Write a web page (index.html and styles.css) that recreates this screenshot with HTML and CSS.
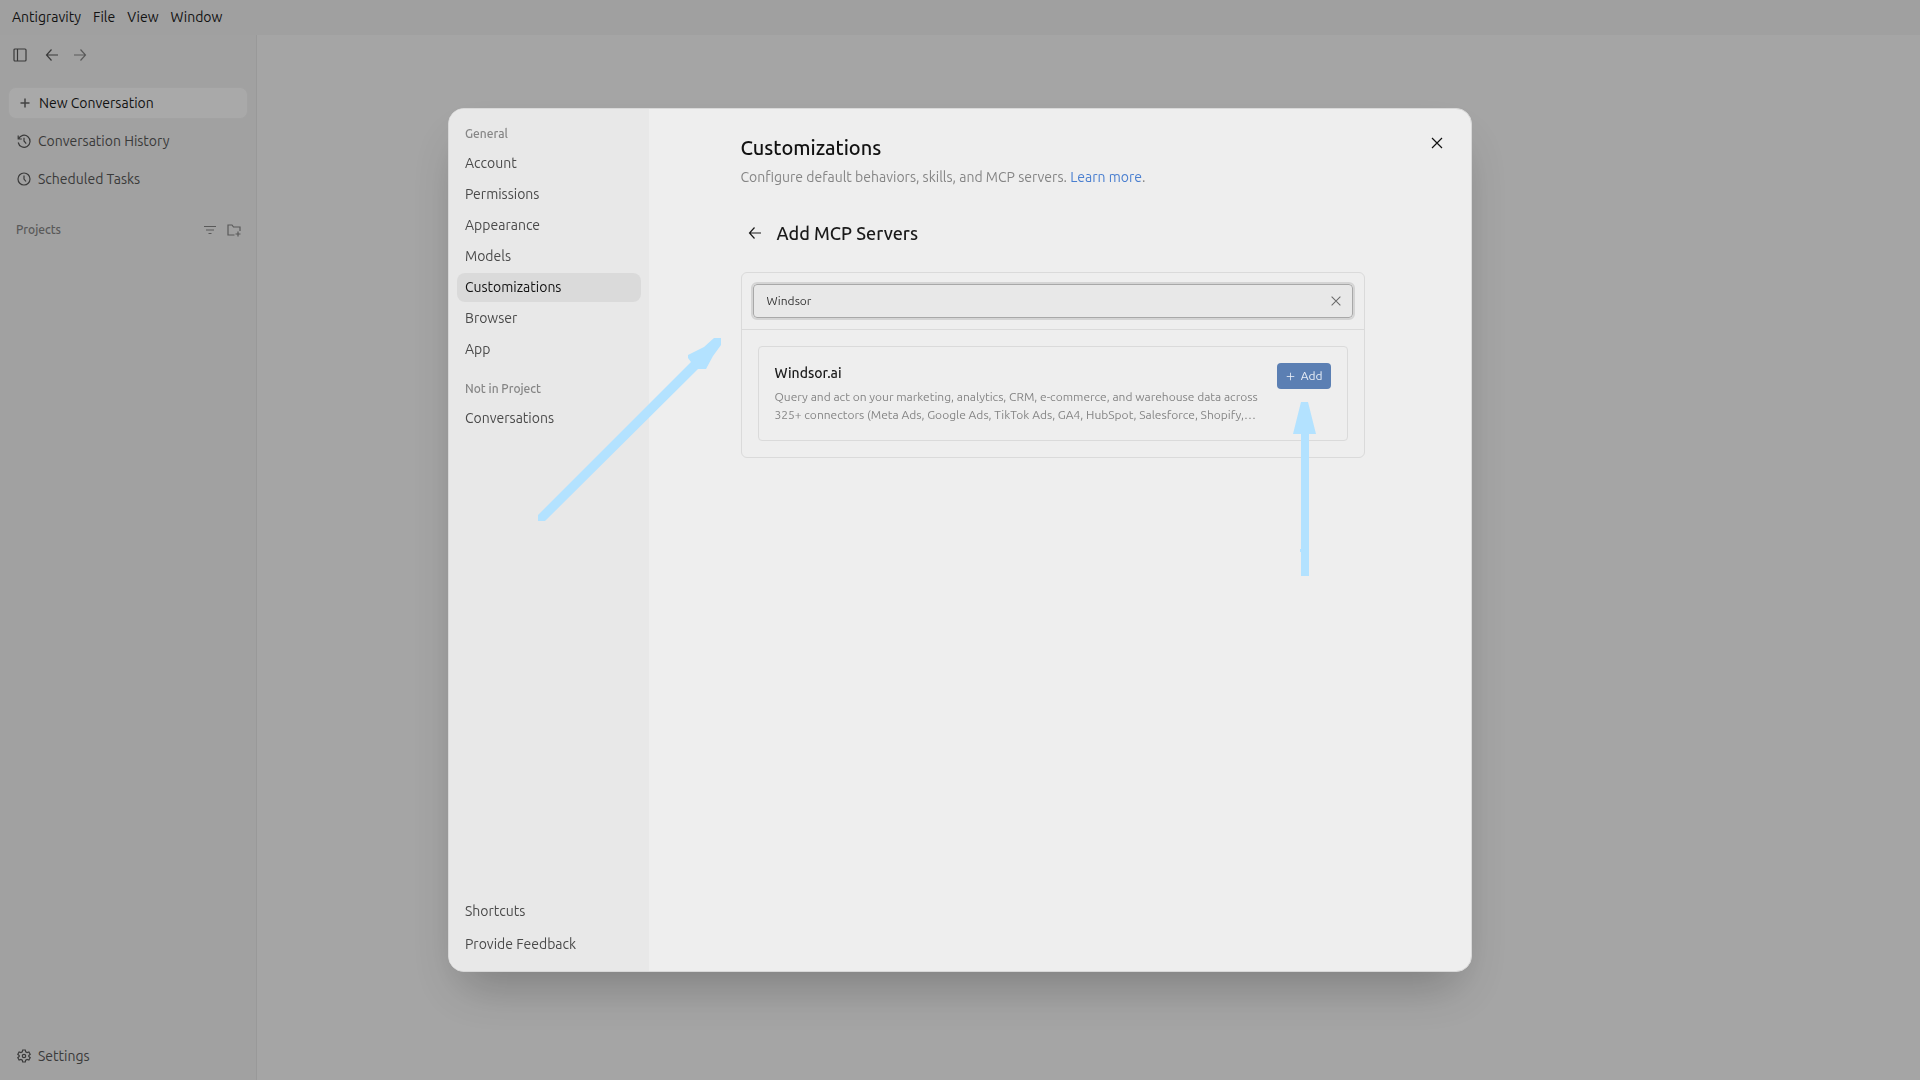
FILE: index.html
```html
<!DOCTYPE html>
<html lang="en">
<head>
  <meta charset="UTF-8" />
  <meta name="viewport" content="width=device-width, initial-scale=1.0" />
  <title>Antigravity</title>
  <link rel="stylesheet" href="styles.css">
</head>
<body>
  <div class="app">
    <nav class="menubar">
      <button>Antigravity</button>
      <button>File</button>
      <button>View</button>
      <button>Window</button>
    </nav>

    <div class="workspace">
      <aside class="sidebar">
        <div class="toolbar">
          <button aria-label="Toggle sidebar">
            <svg class="icon" viewBox="0 0 16 16"><rect x="2" y="2" width="12" height="12" rx="1" /><path d="M5.5 2v12" /></svg>
          </button>
          <button class="back" aria-label="Back">
            <svg class="icon" viewBox="0 0 16 16"><path d="M14 8H3M7.500 2.500L2.500 8l5 5.500" /></svg>
          </button>
          <button class="forward" aria-label="Forward">
            <svg class="icon" viewBox="0 0 16 16"><path d="M2 8h11M8.500 2.500l5 5.500-5 5.500" /></svg>
          </button>
        </div>

        <button class="side-item new">
          <svg class="icon" viewBox="0 0 16 16"><path d="M8 3.500v9M3.500 8h9" /></svg>
          New Conversation
        </button>
        <button class="side-item">
          <svg class="icon" viewBox="0 0 16 16"><path d="M2.500 6A6 6 0 1 1 2.200 9.500M2.200 2.500V6h3.600M2.200 6l2-2.200M8 4.800V8l2.200 2.700" /></svg>
          Conversation History
        </button>
        <button class="side-item">
          <svg class="icon" viewBox="0 0 16 16"><circle cx="8" cy="8" r="6" /><path d="M8 4.500V8l2 2.500" /></svg>
          Scheduled Tasks
        </button>

        <div class="projects">
          <h2>Projects</h2>
          <button aria-label="Filter projects">
            <svg class="icon" viewBox="0 0 16 16"><path d="M2 4.500h12M4 8h8M6.500 11.500h3" /></svg>
          </button>
          <button aria-label="New project">
            <svg class="icon" viewBox="0 0 16 16"><path d="M8.500 13H2V3h4l1.500 2H14v4M12 9.500v5M9.500 12h5" /></svg>
          </button>
        </div>

        <button class="side-item settings">
          <svg class="icon" viewBox="0 0 16 16"><path d="M6.700 2h2.600l.4 1.800 1.400.8 1.800-.6 1.300 2.300L12.800 7.500v1l1.400 1.200-1.300 2.300-1.800-.6-1.400.8-.4 1.800H6.700l-.4-1.800-1.400-.8-1.800.6-1.300-2.300 1.400-1.200v-1L1.800 6.300l1.300-2.300 1.800.6 1.400-.8z" /><circle cx="8" cy="8" r="1.700" /></svg>
          Settings
        </button>
      </aside>
      <main class="canvas"></main>
    </div>
  </div>

  <div class="backdrop">
    <div class="modal" role="dialog" aria-modal="true" aria-labelledby="modalTitle">
      <nav class="modal-nav">
        <h3>General</h3>
        <button>Account</button>
        <button>Permissions</button>
        <button>Appearance</button>
        <button>Models</button>
        <button class="active">Customizations</button>
        <button>Browser</button>
        <button>App</button>
        <h3 class="second">Not in Project</h3>
        <button>Conversations</button>
        <div class="nav-bottom">
          <button>Shortcuts</button>
          <button>Provide Feedback</button>
        </div>
      </nav>

      <section class="modal-main">
        <div class="content">
          <h1 id="modalTitle">Customizations</h1>
          <p class="subtitle">Configure default behaviors, skills, and MCP servers. <a href="#">Learn more</a>.</p>

          <div class="section-head">
            <button aria-label="Back">
              <svg class="icon" viewBox="0 0 16 16"><path d="M14 8H3M7.500 2.500L2.500 8l5 5.500" /></svg>
            </button>
            <h2>Add MCP Servers</h2>
          </div>

          <div class="panel">
            <div class="search-row">
              <div class="search">
                <input type="text" value="Windsor" aria-label="Search MCP servers" />
                <button aria-label="Clear search">
                  <svg class="icon" viewBox="0 0 16 16"><path d="M3 3l10 10M13 3L3 13" /></svg>
                </button>
              </div>
            </div>
            <div class="results">
              <article class="server">
                <div class="server-info">
                  <h3>Windsor.ai</h3>
                  <p>Query and act on your marketing, analytics, CRM, e-commerce, and warehouse data across 325+ connectors (Meta Ads, Google Ads, TikTok Ads, GA4, HubSpot, Salesforce, Shopify,…</p>
                </div>
                <button class="add">
                  <svg class="icon" viewBox="0 0 16 16"><path d="M8 2.500v11M2.500 8h11" /></svg>
                  Add
                </button>
              </article>
            </div>
          </div>
        </div>
        <button class="close" aria-label="Close">
          <svg class="icon" viewBox="0 0 16 16"><path d="M3 3l10 10M13 3L3 13" /></svg>
        </button>
      </section>

      <!-- pointer arrows drawn over the dialog -->
      <svg class="pointer search-pointer" viewBox="0 0 184 184">
        <path d="M0 177L153 24L150 20V17L166 9L176 0H183V7L175 18L168 31H160L7 183H0z" />
      </svg>
      <svg class="pointer add-pointer" viewBox="0 0 24 174">
        <path d="M8 0H15L23 32H16V174H8V150H7V147H8V32H0z" />
      </svg>
    </div>
  </div>
</body>
</html>
```
FILE: styles.css
```css
:root {
  --text: #1a1a1a;
  --text-mid: #4a4a4a;
  --text-soft: #858585;
  --line: #dadada;
  --surface: #eeeeee;
  --accent: #5b7fb3;
}

* {
  box-sizing: border-box;
}

body {
  margin: 0;
  font-family: Ubuntu, Roboto, sans-serif;
  font-size: 14px;
  line-height: 20px;
  color: var(--text);
}

button {
  padding: 0;
  border: none;
  background: none;
  font: inherit;
  color: inherit;
  text-align: left;
  cursor: pointer;
}

h1, h2, h3, p {
  margin: 0;
  font-weight: 400;
}

.icon {
  display: block;
  width: 16px;
  height: 16px;
  flex: none;
  fill: none;
  stroke: currentColor;
  stroke-width: 1.2;
}

/* app window */
.app {
  height: 100vh;
  display: flex;
  flex-direction: column;
  background: #e6e6e6;
}

.menubar {
  display: flex;
  align-items: flex-start;
  gap: 12px;
  height: 35px;
  padding: 7px 12px;
}

.workspace {
  flex: 1;
  display: flex;
}

.sidebar {
  width: 257px;
  display: flex;
  flex-direction: column;
  gap: 6px;
  padding: 8px;
  background: #e7e7e7;
  border-right: 1px solid #dcdcdc;
  color: #545454;
}

.canvas {
  flex: 1;
  background: #ededed;
}

.toolbar {
  display: flex;
  align-items: center;
  gap: 12px;
  height: 24px;
  margin-bottom: 14px;
  padding-left: 4px;
}

.back {
  margin-left: 4px;
}

.forward {
  color: #808080;
}

.side-item {
  display: flex;
  align-items: center;
  gap: 6px;
  height: 32px;
  padding: 0 8px;
}

.new {
  border: 1px solid #e9e9e9;
  border-radius: 8px;
  background: #f3f3f3;
  color: var(--text);
}

.new .icon {
  color: #606060;
  stroke-width: 1.5;
}

.projects {
  display: flex;
  align-items: center;
  gap: 8px;
  height: 24px;
  margin-top: 17px;
  padding: 0 6px 0 8px;
  color: #808080;
}

.projects h2 {
  flex: 1;
  font-size: 12px;
  font-weight: 500;
}

.settings {
  margin-top: auto;
}

/* dialog */
.backdrop {
  position: fixed;
  inset: 0;
  display: flex;
  align-items: center;
  justify-content: center;
  background: rgba(0, 0, 0, 0.3);
}

.modal {
  position: relative;
  display: flex;
  width: 90%;
  max-width: 1024px;
  height: 80vh;
  border: 1px solid #d8d8d8;
  border-radius: 16px;
  background: var(--surface);
  box-shadow: 0 25px 50px -12px rgba(0, 0, 0, 0.25);
}

.modal-nav {
  width: 200px;
  display: flex;
  flex-direction: column;
  gap: 2px;
  padding: 10px 8px 12px;
  border-radius: 15px 0 0 15px;
  background: #e8e8e8;
  color: var(--text-mid);
}

.modal-nav h3 {
  padding: 2px 8px 0;
  font-size: 12px;
  font-weight: 500;
  line-height: 26px;
  color: var(--text-soft);
}

.modal-nav .second {
  margin-top: 8px;
}

.modal-nav button {
  padding: 4px 8px 5px;
  border-radius: 8px;
}

.modal-nav .active {
  background: #dadada;
  color: #111;
}

.nav-bottom {
  display: flex;
  flex-direction: column;
  gap: 4px;
  margin-top: auto;
}

.modal-main {
  flex: 1;
  padding: 24px 39px 24px 24px;
}

.content {
  max-width: 624px;
  margin: 0 auto;
}

h1 {
  font-size: 20px;
  font-weight: 500;
  line-height: 30px;
  color: #111;
}

.subtitle {
  margin-top: 4px;
  color: var(--text-soft);
}

.subtitle a {
  color: #4a7fd0;
  text-decoration: none;
}

.section-head {
  display: flex;
  align-items: center;
  gap: 14px;
  margin: 32px 0 25px;
  padding-left: 6px;
}

.section-head h2 {
  font-size: 18px;
  font-weight: 500;
  line-height: 28px;
}

.panel {
  border: 1px solid var(--line);
  border-radius: 6px;
}

.search-row {
  padding: 11px;
  border-bottom: 1px solid var(--line);
}

.search {
  position: relative;
}

.search input {
  display: block;
  width: 100%;
  height: 34px;
  padding: 0 40px 1px 13px;
  border: 1px solid #a8a8a8;
  border-radius: 4px;
  outline: 2px solid #d4d4d4;
  background: #e8e8e8;
  font: inherit;
  font-size: 12px;
  color: #333;
}

.search button {
  position: absolute;
  top: 10px;
  right: 10px;
  color: #6a6a6a;
}

.search .icon {
  width: 14px;
  height: 14px;
}

.results {
  padding: 16px;
}

.server {
  display: flex;
  align-items: flex-start;
  gap: 16px;
  padding: 16px;
  border: 1px solid var(--line);
  border-radius: 4px;
}

.server-info {
  flex: 1;
}

.server h3 {
  font-size: 14px;
  font-weight: 500;
}

.server p {
  margin-top: 5px;
  font-size: 12px;
  line-height: 18px;
  color: var(--text-soft);
}

.add {
  display: flex;
  align-items: center;
  gap: 5px;
  height: 26px;
  padding: 0 8px;
  border-radius: 4px;
  background: var(--accent);
  font-size: 12px;
  color: #e8eef6;
}

.add .icon {
  width: 11px;
  height: 11px;
}

.close {
  position: absolute;
  top: 26px;
  right: 26px;
  color: #111;
}

.pointer {
  position: absolute;
  fill: #b3e2ff;
  pointer-events: none;
}

.search-pointer {
  top: 229px;
  left: 89px;
  width: 184px;
}

.add-pointer {
  top: 293px;
  right: 154px;
  width: 24px;
}
```
